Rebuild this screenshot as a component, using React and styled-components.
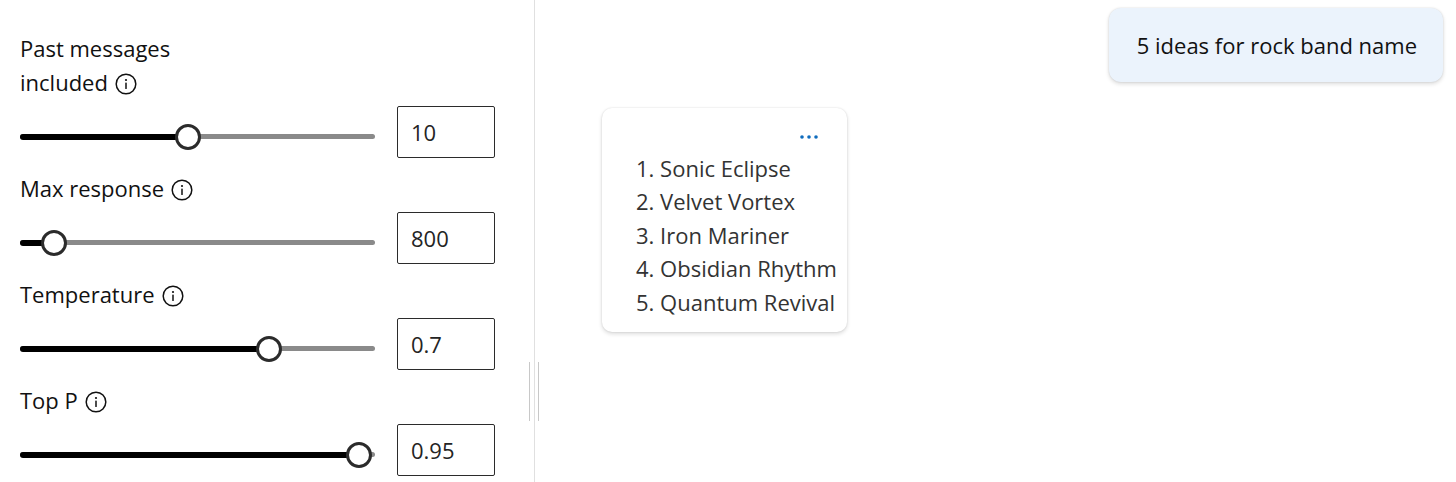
import React from "react";
import styled, { createGlobalStyle } from "styled-components";

const GlobalStyle = createGlobalStyle`
  html, body {
    margin: 0;
    padding: 0;
    background: #ffffff;
  }
  body {
    font-family: "Open Sans", "Noto Sans", sans-serif;
    color: #111111;
  }
`;

const Page = styled.div`
  display: flex;
  height: 482px;
  width: 1456px;
  overflow: hidden;
`;

const Settings = styled.div`
  position: relative;
  box-sizing: border-box;
  width: 535px;
  flex-shrink: 0;
  border-right: 1px solid #e0e0e0;
  padding: 31px 0 0 20px;
  display: flex;
  flex-direction: column;
  gap: 13px;
`;

const ResizeHandle = styled.div`
  position: absolute;
  right: -5px;
  top: 362px;
  width: 8px;
  height: 59px;
  border-left: 1px solid #c8c8c8;
  border-right: 1px solid #c8c8c8;
`;

const Group = styled.div`
  display: flex;
  flex-direction: column;
  gap: 7px;
`;

const Label = styled.div`
  max-width: 175px;
  font-size: 22px;
  line-height: 34px;
  color: #111111;

  svg {
    vertical-align: -4px;
    margin-left: 7px;
  }
`;

const Row = styled.div`
  display: flex;
  align-items: center;
`;

const Track = styled.div`
  position: relative;
  width: 355px;
  height: 5px;
  margin-top: 9px;
  border-radius: 3px;
  background: #8a8a8a;
`;

const Fill = styled.div`
  height: 6px;
  margin-top: -0.5px;
  border-radius: 3px;
  background: #000000;
`;

const Thumb = styled.div`
  position: absolute;
  top: 50%;
  width: 20px;
  height: 20px;
  border: 3px solid #2b2b2b;
  border-radius: 50%;
  background: #ffffff;
  transform: translate(-50%, -50%);
`;

const ValueBox = styled.div`
  box-sizing: border-box;
  width: 98px;
  height: 52px;
  margin-left: 22px;
  padding-left: 13px;
  border: 1.5px solid #2b2b2b;
  border-radius: 2px;
  display: flex;
  align-items: center;
  font-size: 22px;
  color: #242424;
`;

const Chat = styled.div`
  flex: 1;
  display: flex;
  flex-direction: column;
  padding: 8px 13px 0 67px;
`;

const UserBubble = styled.div`
  align-self: flex-end;
  box-sizing: border-box;
  height: 74px;
  padding: 0 26px 0 28px;
  display: flex;
  align-items: center;
  border-radius: 12px;
  background: #ebf3fc;
  box-shadow: 0 2px 4px rgba(0, 0, 0, 0.14), 0 0 2px rgba(0, 0, 0, 0.12);
  font-size: 22px;
  color: #111111;
`;

const ReplyCard = styled.div`
  align-self: flex-start;
  box-sizing: border-box;
  width: 245px;
  margin-top: 26px;
  padding: 14px 6px 13px 34px;
  border-radius: 10px;
  background: #ffffff;
  box-shadow: 0 2px 4px rgba(0, 0, 0, 0.14), 0 0 2px rgba(0, 0, 0, 0.12);
`;

const CardHeader = styled.div`
  display: flex;
  justify-content: flex-end;
  padding-right: 22px;
  height: 30px;
  align-items: center;
`;

const Items = styled.ol`
  margin: 0;
  padding: 0;
  list-style: none;
`;

const Item = styled.li`
  font-size: 22px;
  line-height: 33.4px;
  color: #333333;
  white-space: nowrap;
`;

const InfoIcon = () => (
  <svg width="22" height="22" viewBox="0 0 22 22">
    <circle cx="11" cy="11" r="9.8" fill="none" stroke="#111" strokeWidth="1.5" />
    <circle cx="11" cy="7" r="1.1" fill="#111" />
    <rect x="10.25" y="9.4" width="1.5" height="6.6" rx="0.6" fill="#111" />
  </svg>
);

const MoreDots = () => (
  <svg width="20" height="6" viewBox="0 0 20 6">
    <circle cx="3" cy="3" r="1.8" fill="#0f6cbd" />
    <circle cx="10" cy="3" r="1.8" fill="#0f6cbd" />
    <circle cx="17" cy="3" r="1.8" fill="#0f6cbd" />
  </svg>
);

const params = [
  { label: "Past messages included", value: "10", thumb: 168 },
  { label: "Max response", value: "800", thumb: 34 },
  { label: "Temperature", value: "0.7", thumb: 249 },
  { label: "Top P", value: "0.95", thumb: 339 },
];

const ideas = [
  "Sonic Eclipse",
  "Velvet Vortex",
  "Iron Mariner",
  "Obsidian Rhythm",
  "Quantum Revival",
];

const App = () => {
  return (
    <>
      <GlobalStyle />
      <Page>
        <Settings>
          {params.map((p) => (
            <Group key={p.label}>
              <Label>
                {p.label}
                <InfoIcon />
              </Label>
              <Row>
                <Track>
                  <Fill style={{ width: p.thumb }} />
                  <Thumb style={{ left: p.thumb }} />
                </Track>
                <ValueBox>{p.value}</ValueBox>
              </Row>
            </Group>
          ))}
          <ResizeHandle />
        </Settings>
        <Chat>
          <UserBubble>5 ideas for rock band name</UserBubble>
          <ReplyCard>
            <CardHeader>
              <MoreDots />
            </CardHeader>
            <Items>
              {ideas.map((idea, i) => (
                <Item key={idea}>
                  {i + 1}. {idea}
                </Item>
              ))}
            </Items>
          </ReplyCard>
        </Chat>
      </Page>
    </>
  );
};

export default App;
